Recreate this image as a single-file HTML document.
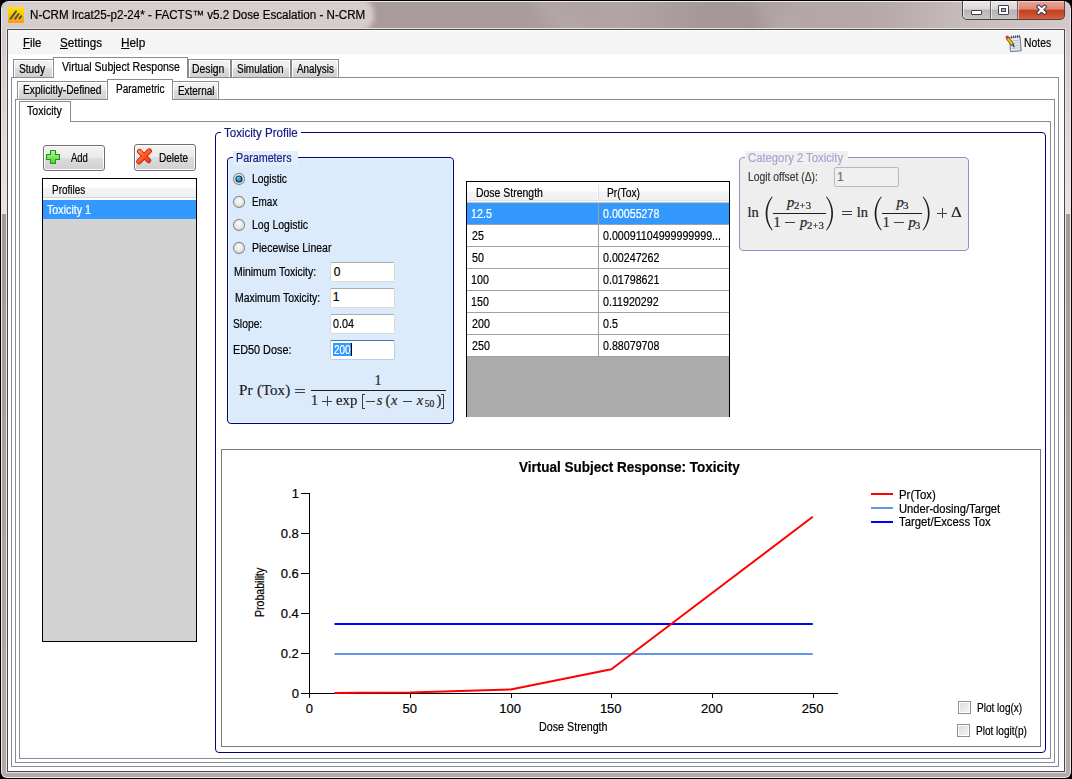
<!DOCTYPE html>
<html><head><meta charset="utf-8">
<style>
*{margin:0;padding:0;box-sizing:border-box}
html,body{width:1072px;height:779px;overflow:hidden;background:#000}
body{position:relative;font-family:"Liberation Sans",sans-serif;font-size:11px;color:#000}
.a{position:absolute}
.t{position:absolute;white-space:pre;line-height:20px;font-family:"Liberation Sans",sans-serif;-webkit-text-stroke:0.2px currentColor}
u{text-decoration:underline;text-underline-offset:1px}
</style></head><body>
<div class="a" style="left:1px;top:1px;width:1070px;height:777px;border-radius:8px 8px 6px 6px;background:#eee9e9"></div>
<div class="a" style="left:2px;top:2px;width:1068px;height:775px;border-radius:7px 7px 5px 5px;overflow:hidden;background:linear-gradient(180deg,#a79897 0,#a79897 212px,#b7a9a8 100%)"><div class="a" style="left:0;top:0;width:1068px;height:212px;background:linear-gradient(180deg,#d2c8c7 0,#d2c8c7 26px,#d6cdcc 60px,#e9e3e3 212px)"></div><div class="a" style="left:0;top:0;width:1068px;height:27px;background:linear-gradient(90deg,#a99b9a 0,#a99b9a 520px,#aea1a0 560px,#b2a5a4 620px,#a69897 700px,#a59796 750px,#b3a6a5 790px,#b6a9a8 880px,#c6bcbb 960px,#d2c9c8 1068px)"></div><div class="a" style="left:-60px;top:0;width:1188px;height:27px;transform:skewX(40deg);background:linear-gradient(90deg,transparent 0,transparent 590px,rgba(255,255,255,.07) 615px,transparent 650px,transparent 800px,rgba(255,255,255,.06) 830px,transparent 860px)"></div><div class="a" style="left:-10px;top:-4px;width:382px;height:34px;border-radius:0 16px 16px 0;background:#d6cecd;filter:blur(2.5px)"></div></div>
<div class="a" style="left:6px;top:28px;width:1060px;height:745px;background:#e9e4e4"></div>
<div class="a" style="left:7px;top:29px;width:1058px;height:743px;background:#4e4747"></div>
<div class="a" style="left:8px;top:30px;width:1056px;height:741px;background:#ffffff"></div>
<div class="a" style="left:8px;top:31px;width:1056px;height:23px;background:#f5f5f5"></div>
<div class="a" style="left:8px;top:7px;width:16px;height:16px;background:linear-gradient(180deg,#ffe400 0,#ffc400 50%,#ff9a12 100%)"><svg width="16" height="16" style="position:absolute;left:0;top:0"><g stroke="#505050" stroke-width="2" stroke-linecap="round"><line x1="2.6" y1="11.6" x2="8" y2="4.4"/><line x1="7.2" y1="11.6" x2="10.6" y2="7"/><line x1="11.6" y1="11.4" x2="13.2" y2="9.2"/></g></svg></div>
<div class="a" style="left:962px;top:1px;width:103px;height:19px;border:1px solid #4c4444;border-top:none;border-radius:0 0 5px 5px;overflow:hidden;background:#6c6060">
<div class="a" style="left:0;top:0;width:27px;height:18px;background:linear-gradient(180deg,#ece8e8 0,#dcd7d7 45%,#b9b2b3 50%,#c9c4c7 100%);box-shadow:inset 1px 1px 0 rgba(255,255,255,.6)"></div>
<div class="a" style="left:28px;top:0;width:26px;height:18px;background:linear-gradient(180deg,#ece8e8 0,#dcd7d7 45%,#b9b2b3 50%,#c9c4c7 100%);box-shadow:inset 1px 1px 0 rgba(255,255,255,.6)"></div>
<div class="a" style="left:55px;top:0;width:47px;height:18px;background:linear-gradient(180deg,#eaa595 0,#df8672 45%,#c43e1f 52%,#d5613f 100%);box-shadow:inset 1px 1px 0 rgba(255,230,220,.6)"></div>
<div class="a" style="left:8px;top:9px;width:11px;height:5px;background:#fff;border:1px solid #3c4152;border-radius:1px"></div>
<div class="a" style="left:35px;top:4px;width:11px;height:10px;background:#fff;border:1px solid #3c4152;border-radius:1px"></div>
<div class="a" style="left:38px;top:7px;width:5px;height:4px;background:#b4b2b8;border:1px solid #3c4152"></div>
<svg class="a" style="left:73px;top:3px" width="13" height="13"><path d="M2.6 2.8 L8.6 8.8 M8.6 2.8 L2.6 8.8" stroke="#3c4152" stroke-width="4.4" stroke-linecap="round"/><path d="M2.6 2.8 L8.6 8.8 M8.6 2.8 L2.6 8.8" stroke="#fff" stroke-width="2.2" stroke-linecap="round"/></svg>
</div>
<svg class="a" style="left:1005px;top:35px" width="17" height="17">
<path d="M4.5 2.5 L15 1.5 L16.2 15.8 L5.5 16.5 Z" fill="#e4eaf4" stroke="#6a7280" stroke-width="1"/>
<path d="M6 6 l8 -.7 M6.3 8.5 l8 -.7 M6.6 11 l8 -.7 M6.9 13.5 l8 -.7" stroke="#aab6c8" stroke-width=".8"/>
<path d="M6.5 .8 v2.6 M8.5 .6 v2.6 M10.5 .4 v2.6 M12.5 .2 v2.6 M14.3 0 v2.6" stroke="#505868" stroke-width="1"/>
<path d="M2.2 2.6 L7.8 10" stroke="#6a5000" stroke-width="3.4" stroke-linecap="butt"/>
<path d="M2.2 2.6 L7.8 10" stroke="#f8d020" stroke-width="1.8"/>
<path d="M7.2 9.2 L9 12.2 L8.6 9.8 Z" fill="#404040" stroke="#404040" stroke-width="1"/>
<circle cx="2.3" cy="2.3" r="1.7" fill="#d83a3a"/>
</svg>
<div class="a" style="left:11px;top:77px;width:1048px;height:690px;background:#fff;border:1px solid #898c95"></div>
<div class="a" style="left:13px;top:59px;width:41px;height:18px;background:linear-gradient(180deg,#f3f3f3 0,#ebebeb 50%,#dddddd 50%,#cfcfcf 100%);border:1px solid #898c95;border-bottom:none;box-shadow:inset 1px 1px 0 #fff,inset -1px 0 0 #fff"></div>
<div class="a" style="left:188px;top:59px;width:43px;height:18px;background:linear-gradient(180deg,#f3f3f3 0,#ebebeb 50%,#dddddd 50%,#cfcfcf 100%);border:1px solid #898c95;border-bottom:none;box-shadow:inset 1px 1px 0 #fff,inset -1px 0 0 #fff"></div>
<div class="a" style="left:231px;top:59px;width:60px;height:18px;background:linear-gradient(180deg,#f3f3f3 0,#ebebeb 50%,#dddddd 50%,#cfcfcf 100%);border:1px solid #898c95;border-bottom:none;box-shadow:inset 1px 1px 0 #fff,inset -1px 0 0 #fff"></div>
<div class="a" style="left:291px;top:59px;width:48px;height:18px;background:linear-gradient(180deg,#f3f3f3 0,#ebebeb 50%,#dddddd 50%,#cfcfcf 100%);border:1px solid #898c95;border-bottom:none;box-shadow:inset 1px 1px 0 #fff,inset -1px 0 0 #fff"></div>
<div class="a" style="left:53px;top:57px;width:135px;height:21px;background:#fff;border:1px solid #898c95;border-bottom:none"></div>
<div class="a" style="left:15px;top:99px;width:1040px;height:664px;background:#fff;border:1px solid #898c95"></div>
<div class="a" style="left:17px;top:81px;width:91px;height:18px;background:linear-gradient(180deg,#f3f3f3 0,#ebebeb 50%,#dddddd 50%,#cfcfcf 100%);border:1px solid #898c95;border-bottom:none;box-shadow:inset 1px 1px 0 #fff,inset -1px 0 0 #fff"></div>
<div class="a" style="left:172px;top:81px;width:47px;height:18px;background:linear-gradient(180deg,#f3f3f3 0,#ebebeb 50%,#dddddd 50%,#cfcfcf 100%);border:1px solid #898c95;border-bottom:none;box-shadow:inset 1px 1px 0 #fff,inset -1px 0 0 #fff"></div>
<div class="a" style="left:107px;top:79px;width:66px;height:21px;background:#fff;border:1px solid #898c95;border-bottom:none"></div>
<div class="a" style="left:19px;top:121px;width:1032px;height:638px;background:#fff;border:1px solid #898c95"></div>
<div class="a" style="left:19px;top:101px;width:52px;height:21px;background:#fff;border:1px solid #898c95;border-bottom:none"></div>
<div class="a" style="left:43px;top:145px;width:62px;height:26px;background:linear-gradient(180deg,#f2f2f2 0,#ebebeb 50%,#dddddd 50%,#cfcfcf 100%);border:1px solid #707070;border-radius:3px;box-shadow:inset 0 0 0 1px #fcfcfc"></div>
<div class="a" style="left:134px;top:144px;width:62px;height:27px;background:linear-gradient(180deg,#f2f2f2 0,#ebebeb 50%,#dddddd 50%,#cfcfcf 100%);border:1px solid #707070;border-radius:3px;box-shadow:inset 0 0 0 1px #fcfcfc"></div>
<svg class="a" style="left:45px;top:149px" width="17" height="17">
<defs><linearGradient id="gpl" x1="0" y1="0" x2="0" y2="1"><stop offset="0" stop-color="#b0f898"/><stop offset=".5" stop-color="#84e464"/><stop offset="1" stop-color="#58c83c"/></linearGradient></defs>
<path d="M5.5 1.5 h5 v4 h4 v5 h-4 v4 h-5 v-4 h-4 v-5 h4 z" fill="url(#gpl)" stroke="#1c9a12" stroke-width="1.1" stroke-linejoin="round"/>
</svg>
<svg class="a" style="left:136px;top:148px" width="17" height="17">
<defs><linearGradient id="gx" x1="0" y1="0" x2="1" y2="1"><stop offset="0" stop-color="#ff8a58"/><stop offset=".5" stop-color="#ff5a22"/><stop offset="1" stop-color="#f04010"/></linearGradient></defs>
<g stroke="#c82010" stroke-linecap="round"><line x1="3.6" y1="3.4" x2="12.6" y2="12.6" stroke-width="5"/><line x1="13.2" y1="3" x2="3" y2="13.6" stroke-width="5.4"/></g>
<g stroke="url(#gx)" stroke-linecap="round"><line x1="3.6" y1="3.4" x2="12.6" y2="12.6" stroke-width="3.2"/><line x1="13.2" y1="3" x2="3" y2="13.6" stroke-width="3.6"/></g>
</svg>
<div class="a" style="left:42px;top:178px;width:155px;height:464px;background:#d3d3d3;border:1px solid #000"></div>
<div class="a" style="left:43px;top:179px;width:153px;height:18px;background:linear-gradient(180deg,#ffffff 0,#ffffff 45%,#f3f4f6 50%,#eff0f2 100%)"></div>
<div class="a" style="left:43px;top:197px;width:153px;height:1px;background:#d5d5d5"></div>
<div class="a" style="left:43px;top:198px;width:153px;height:2px;background:#ffffff"></div>
<div class="a" style="left:43px;top:200px;width:153px;height:19px;background:#3399ff"></div>
<div class="a" style="left:215px;top:132px;width:831px;height:621px;border:1px solid #000080;border-radius:4px"></div>
<div class="a" style="left:221px;top:126px;width:80px;height:15px;background:#fff"></div>
<div class="a" style="left:227px;top:157px;width:227px;height:267px;border:1px solid #000080;border-radius:4px;background:#dcebfc;box-shadow:inset 0 0 0 1px #eaf6ff"></div>
<div class="a" style="left:233px;top:151px;width:65px;height:14px;background:#e2effd"></div>
<svg class="a" style="left:232px;top:172px" width="14" height="14"><defs><radialGradient id="rg179" cx="50%" cy="40%" r="60%"><stop offset="0" stop-color="#ffffff"/><stop offset="1" stop-color="#d4d4d4"/></radialGradient></defs><circle cx="7" cy="7" r="5.6" fill="url(#rg179)" stroke="#8e8f8f" stroke-width="1.1"/><defs><linearGradient id="dg179" x1="0" y1="0" x2="1" y2="1"><stop offset="0" stop-color="#b8f0ff"/><stop offset=".45" stop-color="#30a8e0"/><stop offset="1" stop-color="#1a78c8"/></linearGradient></defs><circle cx="7" cy="7" r="3.6" fill="#0e3050"/><circle cx="7" cy="7" r="2.4" fill="url(#dg179)"/></svg>
<svg class="a" style="left:232px;top:195px" width="14" height="14"><defs><radialGradient id="rg202" cx="50%" cy="40%" r="60%"><stop offset="0" stop-color="#ffffff"/><stop offset="1" stop-color="#d4d4d4"/></radialGradient></defs><circle cx="7" cy="7" r="5.6" fill="url(#rg202)" stroke="#8e8f8f" stroke-width="1.1"/></svg>
<svg class="a" style="left:232px;top:218px" width="14" height="14"><defs><radialGradient id="rg225" cx="50%" cy="40%" r="60%"><stop offset="0" stop-color="#ffffff"/><stop offset="1" stop-color="#d4d4d4"/></radialGradient></defs><circle cx="7" cy="7" r="5.6" fill="url(#rg225)" stroke="#8e8f8f" stroke-width="1.1"/></svg>
<svg class="a" style="left:232px;top:241px" width="14" height="14"><defs><radialGradient id="rg248" cx="50%" cy="40%" r="60%"><stop offset="0" stop-color="#ffffff"/><stop offset="1" stop-color="#d4d4d4"/></radialGradient></defs><circle cx="7" cy="7" r="5.6" fill="url(#rg248)" stroke="#8e8f8f" stroke-width="1.1"/></svg>
<div class="a" style="left:330px;top:262px;width:65px;height:20px;background:#fff;border:1px solid #dadada;border-top-color:#ababab;border-radius:2px"></div>
<div class="a" style="left:330px;top:288px;width:65px;height:20px;background:#fff;border:1px solid #dadada;border-top-color:#ababab;border-radius:2px"></div>
<div class="a" style="left:330px;top:314px;width:65px;height:20px;background:#fff;border:1px solid #dadada;border-top-color:#ababab;border-radius:2px"></div>
<div class="a" style="left:330px;top:340px;width:65px;height:20px;background:#fff;border:1px solid #b5cfe7;border-top-color:#3d7bad;border-radius:2px"></div>
<div class="a" style="left:333px;top:343px;width:18px;height:13px;background:#3399ff"></div>
<div class="a" style="left:351px;top:343px;width:1px;height:13px;background:#000"></div>
<div class="a" style="left:295px;top:389px;width:10px;height:1px;background:#404040"></div>
<div class="a" style="left:295px;top:392px;width:10px;height:1px;background:#404040"></div>
<div class="a" style="left:311px;top:390px;width:135px;height:1px;background:#1e1e1e"></div>
<div class="a" style="left:322px;top:401px;width:10px;height:1px;background:#404040"></div>
<div class="a" style="left:327px;top:396px;width:1px;height:10px;background:#404040"></div>
<div class="a" style="left:362px;top:394px;width:1px;height:15px;background:#404040"></div>
<div class="a" style="left:362px;top:394px;width:3px;height:1px;background:#404040"></div>
<div class="a" style="left:362px;top:408px;width:3px;height:1px;background:#404040"></div>
<div class="a" style="left:366px;top:401px;width:9px;height:1px;background:#404040"></div>
<div class="a" style="left:403px;top:401px;width:9px;height:1px;background:#404040"></div>
<div class="a" style="left:443px;top:394px;width:1px;height:15px;background:#404040"></div>
<div class="a" style="left:441px;top:394px;width:3px;height:1px;background:#404040"></div>
<div class="a" style="left:441px;top:408px;width:3px;height:1px;background:#404040"></div>
<div class="a" style="left:466px;top:181px;width:264px;height:236px;background:#ababab;border:1px solid #000;border-bottom:none"></div>
<div class="a" style="left:467px;top:182px;width:262px;height:20px;background:linear-gradient(180deg,#ffffff 0,#ffffff 45%,#f3f4f6 50%,#eff0f2 100%)"></div>
<div class="a" style="left:467px;top:200px;width:262px;height:1px;background:#e3e3e3"></div>
<div class="a" style="left:467px;top:201px;width:262px;height:1px;background:#fbfbfb"></div>
<div class="a" style="left:467px;top:202px;width:262px;height:1px;background:#c8c4bc"></div>
<div class="a" style="left:597px;top:184px;width:1px;height:16px;background:#ffffff"></div>
<div class="a" style="left:598px;top:184px;width:1px;height:16px;background:#e2e3e6"></div>
<div class="a" style="left:467px;top:203px;width:262px;height:21px;background:#3399ff"></div>
<div class="a" style="left:467px;top:224px;width:262px;height:1px;background:#a0a0a0"></div>
<div class="a" style="left:598px;top:203px;width:1px;height:22px;background:#a0a0a0"></div>
<div class="a" style="left:467px;top:225px;width:262px;height:21px;background:#fff"></div>
<div class="a" style="left:467px;top:246px;width:262px;height:1px;background:#a0a0a0"></div>
<div class="a" style="left:598px;top:225px;width:1px;height:22px;background:#a0a0a0"></div>
<div class="a" style="left:467px;top:247px;width:262px;height:21px;background:#fff"></div>
<div class="a" style="left:467px;top:268px;width:262px;height:1px;background:#a0a0a0"></div>
<div class="a" style="left:598px;top:247px;width:1px;height:22px;background:#a0a0a0"></div>
<div class="a" style="left:467px;top:269px;width:262px;height:21px;background:#fff"></div>
<div class="a" style="left:467px;top:290px;width:262px;height:1px;background:#a0a0a0"></div>
<div class="a" style="left:598px;top:269px;width:1px;height:22px;background:#a0a0a0"></div>
<div class="a" style="left:467px;top:291px;width:262px;height:21px;background:#fff"></div>
<div class="a" style="left:467px;top:312px;width:262px;height:1px;background:#a0a0a0"></div>
<div class="a" style="left:598px;top:291px;width:1px;height:22px;background:#a0a0a0"></div>
<div class="a" style="left:467px;top:313px;width:262px;height:21px;background:#fff"></div>
<div class="a" style="left:467px;top:334px;width:262px;height:1px;background:#a0a0a0"></div>
<div class="a" style="left:598px;top:313px;width:1px;height:22px;background:#a0a0a0"></div>
<div class="a" style="left:467px;top:335px;width:262px;height:21px;background:#fff"></div>
<div class="a" style="left:467px;top:356px;width:262px;height:1px;background:#a0a0a0"></div>
<div class="a" style="left:598px;top:335px;width:1px;height:22px;background:#a0a0a0"></div>
<div class="a" style="left:739px;top:157px;width:230px;height:94px;border:1px solid #8f8fd0;border-radius:4px;background:#eeeeee"></div>
<div class="a" style="left:745px;top:151px;width:103px;height:14px;background:#f0f0f0"></div>
<div class="a" style="left:834px;top:167px;width:65px;height:20px;background:#f0f0f0;border:1px solid #b9b9b9;border-radius:2px"></div>
<svg class="a" style="left:740px;top:190px" width="230" height="48"><path d="M32 6.5 C23.5 16 23.5 31 32 40.5 L32.6 40 C25.6 31 25.6 16 32.6 7 Z" fill="#1e1e1e"/><path d="M86.7 6.5 C95.2 16 95.2 31 86.7 40.5 L86.1 40 C93.1 31 93.1 16 86.1 7 Z" fill="#1e1e1e"/><path d="M141 6.5 C132.5 16 132.5 31 141 40.5 L141.6 40 C134.6 31 134.6 16 141.6 7 Z" fill="#1e1e1e"/><path d="M183.3 6.5 C191.8 16 191.8 31 183.3 40.5 L182.7 40 C189.7 31 189.7 16 182.7 7 Z" fill="#1e1e1e"/></svg>
<div class="a" style="left:773px;top:213px;width:53px;height:1px;background:#1e1e1e"></div>
<div class="a" style="left:882px;top:213px;width:40px;height:1px;background:#1e1e1e"></div>
<div class="a" style="left:785px;top:222px;width:10px;height:1px;background:#404040"></div>
<div class="a" style="left:842px;top:211px;width:10px;height:1px;background:#404040"></div>
<div class="a" style="left:842px;top:214px;width:10px;height:1px;background:#404040"></div>
<div class="a" style="left:894px;top:222px;width:10px;height:1px;background:#404040"></div>
<div class="a" style="left:937px;top:213px;width:10px;height:1px;background:#404040"></div>
<div class="a" style="left:942px;top:208px;width:1px;height:10px;background:#404040"></div>
<div class="a" style="left:221px;top:449px;width:820px;height:298px;background:#fff;border:1px solid #7a7a7a"></div>
<svg class="a" style="left:0;top:0" width="1072" height="779"><g shape-rendering="crispEdges" stroke="#000" stroke-width="1"><line x1="309.5" y1="493" x2="309.5" y2="694"/><line x1="309" y1="693.5" x2="838" y2="693.5"/><line x1="301" y1="693.5" x2="309" y2="693.5"/><line x1="301" y1="653.5" x2="309" y2="653.5"/><line x1="301" y1="613.5" x2="309" y2="613.5"/><line x1="301" y1="573.5" x2="309" y2="573.5"/><line x1="301" y1="533.5" x2="309" y2="533.5"/><line x1="301" y1="493.5" x2="309" y2="493.5"/><line x1="309.5" y1="694" x2="309.5" y2="698"/><line x1="410.5" y1="694" x2="410.5" y2="698"/><line x1="511.5" y1="694" x2="511.5" y2="698"/><line x1="611.5" y1="694" x2="611.5" y2="698"/><line x1="712.5" y1="694" x2="712.5" y2="698"/><line x1="813.5" y1="694" x2="813.5" y2="698"/></g><line x1="334.475" y1="654" x2="812.8" y2="654" stroke="#6495ed" stroke-width="2"/><line x1="334.475" y1="624" x2="812.8" y2="624" stroke="#0000ff" stroke-width="2"/><polyline fill="none" stroke="#ff0000" stroke-width="2" stroke-linejoin="round" points="334.5,692.9 359.6,692.8 410.0,692.5 510.7,689.4 611.4,669.2 712.1,593.0 812.8,516.8"/><line x1="871" y1="494" x2="893" y2="494" stroke="#ff0000" stroke-width="2"/><line x1="871" y1="508" x2="893" y2="508" stroke="#6495ed" stroke-width="2"/><line x1="871" y1="522" x2="893" y2="522" stroke="#0000ff" stroke-width="2"/></svg>
<div class="a" style="left:958px;top:701px;width:13px;height:13px;background:linear-gradient(135deg,#d8dbe0 0,#f6f6f6 100%);border:1px solid #8e8f8f;box-shadow:inset 0 0 0 1px #fff"></div>
<div class="a" style="left:957px;top:724px;width:13px;height:13px;background:linear-gradient(135deg,#d8dbe0 0,#f6f6f6 100%);border:1px solid #8e8f8f;box-shadow:inset 0 0 0 1px #fff"></div>
<div class="t" style="left:30.00px;top:4.50px;font-size:12px;font-weight:400;color:#000;font-style:normal;font-family:'Liberation Sans';transform:scaleX(0.9666);transform-origin:0px 0;">N-CRM lrcat25-p2-24* - FACTS™ v5.2 Dose Escalation - N-CRM</div>
<div class="t" style="left:23.10px;top:32.70px;font-size:12px;font-weight:400;color:#000;font-style:normal;font-family:'Liberation Sans';transform:scaleX(0.9474);transform-origin:0px 0;"><u>F</u>ile</div>
<div class="t" style="left:60.00px;top:32.70px;font-size:12px;font-weight:400;color:#000;font-style:normal;font-family:'Liberation Sans';transform:scaleX(0.9721);transform-origin:0px 0;"><u>S</u>ettings</div>
<div class="t" style="left:121.00px;top:32.70px;font-size:12px;font-weight:400;color:#000;font-style:normal;font-family:'Liberation Sans';transform:scaleX(0.9840);transform-origin:0px 0;"><u>H</u>elp</div>
<div class="t" style="left:1024.40px;top:33.00px;font-size:12px;font-weight:400;color:#000;font-style:normal;font-family:'Liberation Sans';transform:scaleX(0.8645);transform-origin:0px 0;">Notes</div>
<div class="t" style="left:19.20px;top:58.50px;font-size:12px;font-weight:400;color:#000;font-style:normal;font-family:'Liberation Sans';transform:scaleX(0.8484);transform-origin:0px 0;">Study</div>
<div class="t" style="left:61.60px;top:56.70px;font-size:12px;font-weight:400;color:#000;font-style:normal;font-family:'Liberation Sans';transform:scaleX(0.8769);transform-origin:0px 0;">Virtual Subject Response</div>
<div class="t" style="left:192.40px;top:58.60px;font-size:12px;font-weight:400;color:#000;font-style:normal;font-family:'Liberation Sans';transform:scaleX(0.8649);transform-origin:0px 0;">Design</div>
<div class="t" style="left:237.40px;top:58.60px;font-size:12px;font-weight:400;color:#000;font-style:normal;font-family:'Liberation Sans';transform:scaleX(0.8304);transform-origin:0px 0;">Simulation</div>
<div class="t" style="left:297.00px;top:58.60px;font-size:12px;font-weight:400;color:#000;font-style:normal;font-family:'Liberation Sans';transform:scaleX(0.8244);transform-origin:0px 0;">Analysis</div>
<div class="t" style="left:23.30px;top:80.40px;font-size:12px;font-weight:400;color:#000;font-style:normal;font-family:'Liberation Sans';transform:scaleX(0.8522);transform-origin:0px 0;">Explicitly-Defined</div>
<div class="t" style="left:115.50px;top:78.80px;font-size:12px;font-weight:400;color:#000;font-style:normal;font-family:'Liberation Sans';transform:scaleX(0.8362);transform-origin:0px 0;">Parametric</div>
<div class="t" style="left:177.60px;top:80.60px;font-size:12px;font-weight:400;color:#000;font-style:normal;font-family:'Liberation Sans';transform:scaleX(0.8273);transform-origin:0px 0;">External</div>
<div class="t" style="left:27.20px;top:101.00px;font-size:12px;font-weight:400;color:#000;font-style:normal;font-family:'Liberation Sans';transform:scaleX(0.8850);transform-origin:0px 0;">Toxicity</div>
<div class="t" style="left:70.60px;top:147.60px;font-size:12px;font-weight:400;color:#000;font-style:normal;font-family:'Liberation Sans';transform:scaleX(0.7909);transform-origin:0px 0;">Add</div>
<div class="t" style="left:158.70px;top:147.60px;font-size:12px;font-weight:400;color:#000;font-style:normal;font-family:'Liberation Sans';transform:scaleX(0.8371);transform-origin:0px 0;">Delete</div>
<div class="t" style="left:52.20px;top:179.80px;font-size:12px;font-weight:400;color:#000;font-style:normal;font-family:'Liberation Sans';transform:scaleX(0.8300);transform-origin:0px 0;">Profiles</div>
<div class="t" style="left:47.30px;top:199.90px;font-size:12px;font-weight:400;color:#fff;font-style:normal;font-family:'Liberation Sans';transform:scaleX(0.8918);transform-origin:0px 0;">Toxicity 1</div>
<div class="t" style="left:223.70px;top:123.00px;font-size:12px;font-weight:400;color:#1a1a80;font-style:normal;font-family:'Liberation Sans';transform:scaleX(0.9623);transform-origin:0px 0;">Toxicity Profile</div>
<div class="t" style="left:235.80px;top:147.50px;font-size:12px;font-weight:400;color:#1a1a80;font-style:normal;font-family:'Liberation Sans';transform:scaleX(0.8952);transform-origin:0px 0;">Parameters</div>
<div class="t" style="left:252.00px;top:168.90px;font-size:12px;font-weight:400;color:#000;font-style:normal;font-family:'Liberation Sans';transform:scaleX(0.8610);transform-origin:0px 0;">Logistic</div>
<div class="t" style="left:252.00px;top:191.70px;font-size:12px;font-weight:400;color:#000;font-style:normal;font-family:'Liberation Sans';transform:scaleX(0.8258);transform-origin:0px 0;">Emax</div>
<div class="t" style="left:252.30px;top:214.80px;font-size:12px;font-weight:400;color:#000;font-style:normal;font-family:'Liberation Sans';transform:scaleX(0.8750);transform-origin:0px 0;">Log Logistic</div>
<div class="t" style="left:252.30px;top:237.50px;font-size:12px;font-weight:400;color:#000;font-style:normal;font-family:'Liberation Sans';transform:scaleX(0.8758);transform-origin:0px 0;">Piecewise Linear</div>
<div class="t" style="left:233.50px;top:261.80px;font-size:12px;font-weight:400;color:#000;font-style:normal;font-family:'Liberation Sans';transform:scaleX(0.8691);transform-origin:0px 0;">Minimum Toxicity:</div>
<div class="t" style="left:234.70px;top:288.30px;font-size:12px;font-weight:400;color:#000;font-style:normal;font-family:'Liberation Sans';transform:scaleX(0.8711);transform-origin:0px 0;">Maximum Toxicity:</div>
<div class="t" style="left:233.00px;top:314.00px;font-size:12px;font-weight:400;color:#000;font-style:normal;font-family:'Liberation Sans';transform:scaleX(0.8588);transform-origin:0px 0;">Slope:</div>
<div class="t" style="left:233.00px;top:339.90px;font-size:12px;font-weight:400;color:#000;font-style:normal;font-family:'Liberation Sans';transform:scaleX(0.9031);transform-origin:0px 0;">ED50 Dose:</div>
<div class="t" style="left:333.70px;top:262.00px;font-size:12px;font-weight:400;color:#000;font-style:normal;font-family:'Liberation Sans';">0</div>
<div class="t" style="left:332.70px;top:287.20px;font-size:12px;font-weight:400;color:#000;font-style:normal;font-family:'Liberation Sans';">1</div>
<div class="t" style="left:333.00px;top:314.00px;font-size:12px;font-weight:400;color:#000;font-style:normal;font-family:'Liberation Sans';transform:scaleX(0.9000);transform-origin:0px 0;">0.04</div>
<div class="t" style="left:333.50px;top:339.90px;font-size:12px;font-weight:400;color:#fff;font-style:normal;font-family:'Liberation Sans';transform:scaleX(0.8250);transform-origin:0px 0;">200</div>
<div class="t" style="left:238.80px;top:379.80px;font-size:15px;font-weight:400;color:#1e1e1e;font-style:normal;font-family:'Liberation Serif';transform:scaleX(1.0143);transform-origin:0px 0;">Pr</div>
<div class="t" style="left:256.90px;top:379.80px;font-size:15px;font-weight:400;color:#1e1e1e;font-style:normal;font-family:'Liberation Serif';">(</div>
<div class="t" style="left:261.90px;top:379.80px;font-size:15px;font-weight:400;color:#1e1e1e;font-style:normal;font-family:'Liberation Serif';">Tox</div>
<div class="t" style="left:285.30px;top:379.80px;font-size:15px;font-weight:400;color:#1e1e1e;font-style:normal;font-family:'Liberation Serif';">)</div>
<div class="t" style="left:374.60px;top:371.00px;font-size:14px;font-weight:400;color:#1e1e1e;font-style:normal;font-family:'Liberation Serif';">1</div>
<div class="t" style="left:311.00px;top:390.90px;font-size:14px;font-weight:400;color:#1e1e1e;font-style:normal;font-family:'Liberation Serif';">1</div>
<div class="t" style="left:336.10px;top:389.90px;font-size:14.5px;font-weight:400;color:#1e1e1e;font-style:normal;font-family:'Liberation Serif';transform:scaleX(1.0238);transform-origin:0px 0;">exp</div>
<div class="t" style="left:376.70px;top:389.90px;font-size:14.5px;font-weight:400;color:#1e1e1e;font-style:italic;font-family:'Liberation Serif';">s</div>
<div class="t" style="left:385.50px;top:389.90px;font-size:14.5px;font-weight:400;color:#1e1e1e;font-style:normal;font-family:'Liberation Serif';">(</div>
<div class="t" style="left:390.90px;top:389.90px;font-size:14.5px;font-weight:400;color:#1e1e1e;font-style:italic;font-family:'Liberation Serif';">x</div>
<div class="t" style="left:416.80px;top:389.90px;font-size:14.5px;font-weight:400;color:#1e1e1e;font-style:italic;font-family:'Liberation Serif';">x</div>
<div class="t" style="left:424.80px;top:393.90px;font-size:9.5px;font-weight:400;color:#1e1e1e;font-style:normal;font-family:'Liberation Serif';">50</div>
<div class="t" style="left:436.40px;top:389.90px;font-size:14.5px;font-weight:400;color:#1e1e1e;font-style:normal;font-family:'Liberation Serif';">)</div>
<div class="t" style="left:470.70px;top:203.80px;font-size:12px;font-weight:400;color:#fff;font-style:normal;font-family:'Liberation Sans';transform:scaleX(0.8900);transform-origin:1px 0;">12.5</div>
<div class="t" style="left:602.60px;top:203.80px;font-size:12px;font-weight:400;color:#fff;font-style:normal;font-family:'Liberation Sans';transform:scaleX(0.8900);transform-origin:0px 0;">0.00055278</div>
<div class="t" style="left:471.70px;top:225.80px;font-size:12px;font-weight:400;color:#000;font-style:normal;font-family:'Liberation Sans';transform:scaleX(0.8900);transform-origin:0px 0;">25</div>
<div class="t" style="left:602.60px;top:225.80px;font-size:12px;font-weight:400;color:#000;font-style:normal;font-family:'Liberation Sans';transform:scaleX(0.8900);transform-origin:0px 0;">0.00091104999999999...</div>
<div class="t" style="left:471.70px;top:247.80px;font-size:12px;font-weight:400;color:#000;font-style:normal;font-family:'Liberation Sans';transform:scaleX(0.8900);transform-origin:0px 0;">50</div>
<div class="t" style="left:602.60px;top:247.80px;font-size:12px;font-weight:400;color:#000;font-style:normal;font-family:'Liberation Sans';transform:scaleX(0.8900);transform-origin:0px 0;">0.00247262</div>
<div class="t" style="left:470.70px;top:269.80px;font-size:12px;font-weight:400;color:#000;font-style:normal;font-family:'Liberation Sans';transform:scaleX(0.8900);transform-origin:1px 0;">100</div>
<div class="t" style="left:602.60px;top:269.80px;font-size:12px;font-weight:400;color:#000;font-style:normal;font-family:'Liberation Sans';transform:scaleX(0.8900);transform-origin:0px 0;">0.01798621</div>
<div class="t" style="left:470.70px;top:291.80px;font-size:12px;font-weight:400;color:#000;font-style:normal;font-family:'Liberation Sans';transform:scaleX(0.8900);transform-origin:1px 0;">150</div>
<div class="t" style="left:602.60px;top:291.80px;font-size:12px;font-weight:400;color:#000;font-style:normal;font-family:'Liberation Sans';transform:scaleX(0.8900);transform-origin:0px 0;">0.11920292</div>
<div class="t" style="left:471.70px;top:313.80px;font-size:12px;font-weight:400;color:#000;font-style:normal;font-family:'Liberation Sans';transform:scaleX(0.8900);transform-origin:0px 0;">200</div>
<div class="t" style="left:602.60px;top:313.80px;font-size:12px;font-weight:400;color:#000;font-style:normal;font-family:'Liberation Sans';transform:scaleX(0.8900);transform-origin:0px 0;">0.5</div>
<div class="t" style="left:471.70px;top:335.80px;font-size:12px;font-weight:400;color:#000;font-style:normal;font-family:'Liberation Sans';transform:scaleX(0.8900);transform-origin:0px 0;">250</div>
<div class="t" style="left:602.60px;top:335.80px;font-size:12px;font-weight:400;color:#000;font-style:normal;font-family:'Liberation Sans';transform:scaleX(0.8900);transform-origin:0px 0;">0.88079708</div>
<div class="t" style="left:476.20px;top:182.90px;font-size:12px;font-weight:400;color:#000;font-style:normal;font-family:'Liberation Sans';transform:scaleX(0.8714);transform-origin:0px 0;">Dose Strength</div>
<div class="t" style="left:606.50px;top:182.90px;font-size:12px;font-weight:400;color:#000;font-style:normal;font-family:'Liberation Sans';transform:scaleX(0.8513);transform-origin:0px 0;">Pr(Tox)</div>
<div class="t" style="left:747.70px;top:147.50px;font-size:12px;font-weight:400;color:#a6a6cf;font-style:normal;font-family:'Liberation Sans';transform:scaleX(0.9402);transform-origin:0px 0;">Category 2 Toxicity</div>
<div class="t" style="left:747.70px;top:166.50px;font-size:12px;font-weight:400;color:#3c3c3c;font-style:normal;font-family:'Liberation Sans';transform:scaleX(0.8617);transform-origin:0px 0;">Logit offset (Δ):</div>
<div class="t" style="left:837.00px;top:167.00px;font-size:12px;font-weight:400;color:#6d6d6d;font-style:normal;font-family:'Liberation Sans';">1</div>
<div class="t" style="left:747.40px;top:202.20px;font-size:14.5px;font-weight:400;color:#1e1e1e;font-style:normal;font-family:'Liberation Serif';">ln</div>
<div class="t" style="left:856.80px;top:202.20px;font-size:14.5px;font-weight:400;color:#1e1e1e;font-style:normal;font-family:'Liberation Serif';">ln</div>
<div class="t" style="left:787.00px;top:192.30px;font-size:14.5px;font-weight:400;color:#1e1e1e;font-style:italic;font-family:'Liberation Serif';">p</div>
<div class="t" style="left:794.00px;top:196.30px;font-size:10.5px;font-weight:400;color:#1e1e1e;font-style:normal;font-family:'Liberation Serif';transform:scaleX(1.0412);transform-origin:0px 0;">2+3</div>
<div class="t" style="left:773.40px;top:212.60px;font-size:14px;font-weight:400;color:#1e1e1e;font-style:normal;font-family:'Liberation Serif';">1</div>
<div class="t" style="left:800.00px;top:211.60px;font-size:14.5px;font-weight:400;color:#1e1e1e;font-style:italic;font-family:'Liberation Serif';">p</div>
<div class="t" style="left:807.00px;top:215.60px;font-size:10.5px;font-weight:400;color:#1e1e1e;font-style:normal;font-family:'Liberation Serif';transform:scaleX(1.0353);transform-origin:0px 0;">2+3</div>
<div class="t" style="left:896.40px;top:192.30px;font-size:14.5px;font-weight:400;color:#1e1e1e;font-style:italic;font-family:'Liberation Serif';">p</div>
<div class="t" style="left:903.00px;top:196.30px;font-size:10.5px;font-weight:400;color:#1e1e1e;font-style:normal;font-family:'Liberation Serif';transform:scaleX(1.0600);transform-origin:0px 0;">3</div>
<div class="t" style="left:882.80px;top:212.60px;font-size:14px;font-weight:400;color:#1e1e1e;font-style:normal;font-family:'Liberation Serif';">1</div>
<div class="t" style="left:908.50px;top:211.60px;font-size:14.5px;font-weight:400;color:#1e1e1e;font-style:italic;font-family:'Liberation Serif';">p</div>
<div class="t" style="left:915.00px;top:215.60px;font-size:10.5px;font-weight:400;color:#1e1e1e;font-style:normal;font-family:'Liberation Serif';transform:scaleX(1.0200);transform-origin:0px 0;">3</div>
<div class="t" style="left:951.20px;top:202.20px;font-size:15.5px;font-weight:400;color:#1e1e1e;font-style:normal;font-family:'Liberation Serif';transform:scaleX(1.0800);transform-origin:0px 0;">Δ</div>
<div class="t" style="left:519.40px;top:457.00px;font-size:14px;font-weight:700;color:#000;font-style:normal;font-family:'Liberation Sans';transform:scaleX(0.9638);transform-origin:0px 0;">Virtual Subject Response: Toxicity</div>
<div class="t" style="left:291.70px;top:683.70px;font-size:13px;font-weight:400;color:#000;font-style:normal;font-family:'Liberation Sans';">0</div>
<div class="t" style="left:280.70px;top:643.70px;font-size:13px;font-weight:400;color:#000;font-style:normal;font-family:'Liberation Sans';">0.2</div>
<div class="t" style="left:280.70px;top:603.70px;font-size:13px;font-weight:400;color:#000;font-style:normal;font-family:'Liberation Sans';">0.4</div>
<div class="t" style="left:280.70px;top:563.70px;font-size:13px;font-weight:400;color:#000;font-style:normal;font-family:'Liberation Sans';">0.6</div>
<div class="t" style="left:280.70px;top:523.70px;font-size:13px;font-weight:400;color:#000;font-style:normal;font-family:'Liberation Sans';">0.8</div>
<div class="t" style="left:291.70px;top:483.70px;font-size:13px;font-weight:400;color:#000;font-style:normal;font-family:'Liberation Sans';">1</div>
<div class="t" style="left:305.80px;top:698.60px;font-size:13px;font-weight:400;color:#000;font-style:normal;font-family:'Liberation Sans';">0</div>
<div class="t" style="left:402.50px;top:698.60px;font-size:13px;font-weight:400;color:#000;font-style:normal;font-family:'Liberation Sans';">50</div>
<div class="t" style="left:499.20px;top:698.60px;font-size:13px;font-weight:400;color:#000;font-style:normal;font-family:'Liberation Sans';">100</div>
<div class="t" style="left:599.90px;top:698.60px;font-size:13px;font-weight:400;color:#000;font-style:normal;font-family:'Liberation Sans';">150</div>
<div class="t" style="left:701.10px;top:698.60px;font-size:13px;font-weight:400;color:#000;font-style:normal;font-family:'Liberation Sans';">200</div>
<div class="t" style="left:801.80px;top:698.60px;font-size:13px;font-weight:400;color:#000;font-style:normal;font-family:'Liberation Sans';">250</div>
<div class="t" style="left:538.50px;top:716.60px;font-size:12px;font-weight:400;color:#000;font-style:normal;font-family:'Liberation Sans';transform:scaleX(0.8935);transform-origin:0px 0;">Dose Strength</div>
<div class="t" style="left:898.50px;top:484.90px;font-size:12px;font-weight:400;color:#000;font-style:normal;font-family:'Liberation Sans';transform:scaleX(0.9513);transform-origin:0px 0;">Pr(Tox)</div>
<div class="t" style="left:898.50px;top:498.50px;font-size:12px;font-weight:400;color:#000;font-style:normal;font-family:'Liberation Sans';transform:scaleX(0.9303);transform-origin:0px 0;">Under-dosing/Target</div>
<div class="t" style="left:898.50px;top:512.20px;font-size:12px;font-weight:400;color:#000;font-style:normal;font-family:'Liberation Sans';transform:scaleX(0.9443);transform-origin:0px 0;">Target/Excess Tox</div>
<div class="t" style="left:977.40px;top:697.80px;font-size:12px;font-weight:400;color:#000;font-style:normal;font-family:'Liberation Sans';transform:scaleX(0.8370);transform-origin:0px 0;">Plot log(x)</div>
<div class="t" style="left:976.20px;top:720.60px;font-size:12px;font-weight:400;color:#000;font-style:normal;font-family:'Liberation Sans';transform:scaleX(0.8377);transform-origin:0px 0;">Plot logit(p)</div>
<div class="t" style="left:250.00px;top:617.20px;font-size:12px;transform-origin:0 0;transform:rotate(-90deg) scaleX(0.8804)">Probability</div>
</body></html>
